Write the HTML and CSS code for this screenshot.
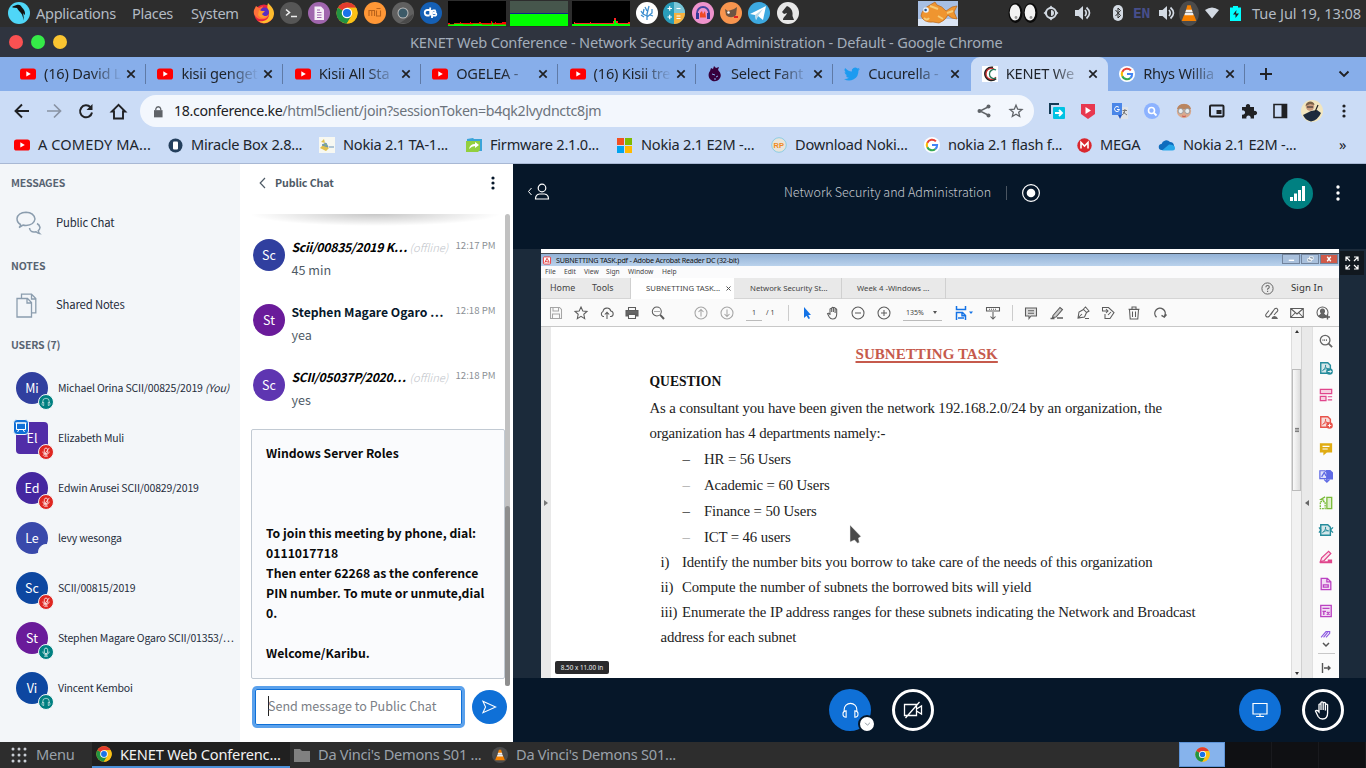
FILE: index.html
```html
<!DOCTYPE html>
<html lang="en">
<head>
<meta charset="utf-8">
<title>KENET Web Conference</title>
<link rel="stylesheet" href="styles.css">
</head>
<body>
<svg class="defs" width="0" height="0">
<defs>
<symbol id="yt" viewBox="0 0 16 16"><rect y="2.5" width="16" height="11" rx="2.6" fill="#f00"/><path d="M6.3 5.3v5.2L10.8 8z" fill="#fff"/></symbol>
<symbol id="x" viewBox="0 0 10 10"><path d="M1.3 1.3l7.4 7.4M8.7 1.3L1.3 8.7" stroke="#202124" stroke-width="1.7" fill="none"/></symbol>
<symbol id="chrome" viewBox="0 0 24 24"><circle cx="12" cy="12" r="11.5" fill="#fbc116"/><path d="M12 12L2 6.3A11.5 11.5 0 0 1 22 6.3H12z" fill="#e33b2e"/><path d="M12 12l5 3-5.2 8.5A11.5 11.5 0 0 1 2 6.3z" fill="#229342"/><path d="M12 6.3h10A11.5 11.5 0 0 1 11.8 23.5L17 15z" fill="#fbc116"/><circle cx="12" cy="12" r="5.7" fill="#fff"/><circle cx="12" cy="12" r="4.4" fill="#1a73e8"/></symbol>
<symbol id="g" viewBox="0 0 16 16"><circle cx="8" cy="8" r="8" fill="#fff"/><g fill="none" stroke-width="2.1"><path d="M11.9 4.4A5.2 5.2 0 0 0 3.3 5.8" stroke="#ea4335"/><path d="M3.3 5.7a5.2 5.2 0 0 0 0 4.6" stroke="#fbbc05"/><path d="M3.3 10.2a5.2 5.2 0 0 0 8.1 1.8" stroke="#34a853"/><path d="M8 8h5.1a5.2 5.2 0 0 1-1.7 4" stroke="#4285f4"/></g></symbol>
<symbol id="vol" viewBox="0 0 16 16"><path d="M0 5h3.5L8 1v14l-4.5-4H0z" fill="#d3dae3"/><path d="M10 5q2.5 3 0 6M11.5 2.5q6 5.500 0 11" fill="none" stroke="#d3dae3" stroke-width="1.7"/></symbol>
<symbol id="cone" viewBox="0 0 16 16"><path d="M6.500 1h3l1.600 6H4.900zM3 11l1-2h8l1 2 1.500 4h-13z" fill="#f58000"/><path d="M5.400 5h5.200l.7 2.500H4.700zM4 10l.4-2h7.200l.4 2z" fill="#eee"/></symbol>
<symbol id="hp" viewBox="0 0 24 24"><path d="M4 14v-3a8 8 0 0 1 16 0v3M6.500 12.500v8c-2.500 0-4-1-4-4s1.500-4 4-4zM17.500 12.500v8c2.500 0 4-1 4-4s-1.500-4-4-4z" fill="none" stroke="currentColor" stroke-width="1.400"/></symbol>
<symbol id="mic" viewBox="0 0 24 24"><path d="M12 2.500c-5 0-4 6-4 10 0 4.500 8 4.500 8 0 0-4 1-10-4-10zM4.500 11c0 9 15 9 15 0M12 18v4M7.500 22h9" fill="none" stroke="currentColor" stroke-width="1.800"/></symbol>
<symbol id="muted" viewBox="0 0 24 24"><path d="M12 2.500c-5 0-4 6-4 10 0 4.500 8 4.500 8 0 0-4 1-10-4-10zM4.500 11c0 9 15 9 15 0M12 18v4M7.500 22h9M20 2L5 21" fill="none" stroke="currentColor" stroke-width="1.800"/></symbol>
<symbol id="pdf" viewBox="0 0 16 16"><path d="M2 2h8l3 3v9H2z" fill="currentColor" fill-opacity=".18" stroke="currentColor" stroke-width="1.600"/><path d="M4 11c2-1 4-4 3.500-6.500C7 7 8 9 11 9 8 8.500 6 9 4 11z" fill="none" stroke="currentColor"/></symbol>
</defs>
</svg>

<div class="screen">
<header class="panel">
  <svg class="i22" viewBox="0 0 22 22"><circle cx="11" cy="11" r="11" fill="#4fd6f7"/><path d="M4.500 4.500l4-1.500c3-.8 4.500.5 5.500 2.500 2 2 3 3.500 3 6.500l-.5 1-1.300-2 .8 7.500-2-6C12 9.500 10 8 9 6L4.500 5.500z" fill="#111"/></svg>
  <span>Applications</span><span>Places</span><span>System</span>
  <svg class="i22" viewBox="0 0 22 22"><circle cx="11" cy="12" r="9.500" fill="#e8233f"/><path d="M15 1c4 4 6 6 6 11a10 10 0 0 1-16 7c6 1 11-1 11-7 0-3-3-5-1-11z" fill="#ffbd2e"/><path d="M1 8l2-4 3 2 4-2-1 3 3 1-2 3c1 3 4 3 6 1-1 5-6 6-10 5-4-2-6-5-5-9z" fill="#ff7139"/><circle cx="11.500" cy="10" r="4.500" fill="#5a2fc0"/><path d="M6 8l3 1 3 0-3 3c2 3 5 2 6 1-2 4-8 4-10 0z" fill="#ff9a2e"/></svg>
  <svg class="i22" viewBox="0 0 22 22"><circle cx="11" cy="11" r="11" fill="#565656"/><path d="M6 7.500l3.500 3L6 13.500M11 14.500h6" stroke="#eee" stroke-width="1.600" fill="none"/></svg>
  <svg class="i22" viewBox="0 0 22 22"><circle cx="11" cy="11" r="11" fill="#a066ae"/><path d="M6.500 4.500h6.500l3 3v10.500H6.500z" fill="#f5eef7"/><path d="M9 8h3M9 10.500h4.500M9 13h4.500M9 15.500h4.500" stroke="#a066ae" fill="none"/></svg>
  <svg class="i22"><use href="#chrome"/></svg>
  <svg class="i22" viewBox="0 0 22 22"><circle cx="11" cy="11" r="11" fill="#ff9736"/><path d="M5 14V8.500h5.500V14M7.800 8.500V14M12.500 8.500V14h4V8.500M12.500 6.500h4" stroke="#b8621b" fill="none" stroke-width="1.100"/></svg>
  <svg class="i22" viewBox="0 0 22 22"><circle cx="11" cy="11" r="11" fill="#606060"/><path d="M8 21h7c4-2 6-5 6-9z" fill="#4a4a4a"/><circle cx="11" cy="11" r="5.500" fill="#bbb"/><circle cx="11" cy="11" r="4.500" fill="#3c5a68"/></svg>
  <svg class="i22" viewBox="0 0 22 22"><circle cx="11" cy="11" r="11" fill="#1560b5"/><path d="M9.500 8H7a2.800 2.800 0 0 0 0 5.500h2.500M10.200 5.500v8M12 8v8M12.500 8.500H15a2 2 0 0 1 0 2.500h-2 2.500a1.500 1.500 0 0 1 0 2.700H12.500" stroke="#fff" fill="none" stroke-width="1.800"/></svg>
  <svg class="graph" viewBox="0 0 58 25"><rect width="58" height="25" fill="#000"/><path d="M0 23v-1h2v1h4v-1h6v-1h1v1h9v-1h1v1h8v-1h2v1h10v-2h1v2h3v-1h1v1h6v-1h4v3H0z" fill="#f00"/><path d="M0 25v-1.500h6v-.7h9v.5h10v-.5h9v.7h10v-2h1v2h13V25z" fill="#0f0"/></svg>
  <svg class="graph" viewBox="0 0 58 25"><rect width="58" height="25" fill="#46564c"/><rect y="12" width="58" height="1" fill="#0b2290"/><rect y="13" width="58" height="12" fill="#0f0"/></svg>
  <svg class="graph" viewBox="0 0 58 25"><rect width="58" height="25" fill="#000"/><path d="M0 23h2v-2h1v1h15v-1h1v1h22v-2h1v-3h2v3h2v2h10v-1h2v3H0z" fill="#f22"/><path d="M0 25v-2h42v-4h2v3h2v1h12v2z" fill="#0f0"/></svg>
  <svg class="i22" viewBox="0 0 22 22"><circle cx="11" cy="11" r="11" fill="#fff"/><path d="M11 18v-7M11 14l-4-2-2-3M7 12l1-5M11 12l2-8M11 15l5-4V7M5 13l3 2M14 13l3 1M11 9L9 5" stroke="#3e8fd0" stroke-width="1.300" fill="none"/></svg>
  <svg class="i22" viewBox="0 0 22 22"><circle cx="11" cy="11" r="11" fill="#2a9dbb"/><path d="M11 0a11 11 0 0 1 11 11H11z" fill="#7cc7d8"/><path d="M11 22a11 11 0 0 0 11-11H11z" fill="#f6b13e"/><path d="M4.500 6.500h4.500M6.700 4.300v4.500M13.500 6.500h4M4.500 15h4.500M6.700 12.800v4.500M13.500 14h4M13.500 16.500h4" stroke="#fff" stroke-width="1.200"/></svg>
  <svg class="i22" viewBox="0 0 22 22"><circle cx="11" cy="11" r="11" fill="#ef93cd"/><path d="M5 14v-3a6 6 0 0 1 12 0v3" stroke="#4545a0" stroke-width="1.800" fill="none"/><rect x="4" y="11" width="3" height="6" fill="#333a98"/><rect x="15" y="11" width="3" height="6" fill="#333a98"/><path d="M8 15.500V11l2-2 1 3 2-3 1 6.500z" fill="#f04a25"/></svg>
  <svg class="i22" viewBox="0 0 22 22"><circle cx="11" cy="11" r="11" fill="#f8954e"/><path d="M5 7l3 2 6-2 3-2-1 8c-3 3-7 3-10 0z" fill="#6d5442"/><circle cx="8.500" cy="10.500" r="1.300" fill="#fff"/><path d="M14 15h4" stroke="#d22" stroke-width="2"/></svg>
  <svg class="i22" viewBox="0 0 22 22"><circle cx="11" cy="11" r="11" fill="#3da9e0"/><path d="M2 12L18 4l-3 14-5-4-2 4-1-5z" fill="#fff"/><path d="M7 13l8-6-5 7-2 4z" fill="#b8d8e8"/></svg>
  <svg class="i22" viewBox="0 0 22 22"><circle cx="11" cy="11" r="11" fill="#e8e8e8"/><path d="M6 18c0-3 3-4 4-7l-3 1-2-2 4-5 1-1 2 1c3 2 4 5 3.500 9L17 18z" fill="#333"/></svg>
  <svg class="fish" viewBox="0 0 40 25"><rect width="40" height="25" fill="#a7bfe4"/><path d="M0 18h40v7H0z" fill="#dbe5f4"/><path d="M3 15q1-7 9-11l5-3 2 3q5 1 9 6l6-4 5-1-3 6 3 7q-6 0-9-4-3 6-9 8l-6-1Q6 22 3 15z" fill="#ef9530" stroke="#b5651d" stroke-width=".7"/><path d="M12 5l8 3M6 17q3 3 5 0M20 15l5 3M29 12l6-2" stroke="#f7cc77" stroke-width="2" fill="none"/><circle cx="8" cy="9" r="2.800" fill="#e7f3ff"/><circle cx="7.600" cy="9" r="1.300" fill="#27538c"/></svg>
  <svg class="eyes" viewBox="0 0 30 22"><ellipse cx="7.500" cy="11" rx="7" ry="10" fill="#0a0a0a"/><ellipse cx="22.500" cy="11" rx="7" ry="10" fill="#0a0a0a"/><ellipse cx="7" cy="10.500" rx="5.300" ry="8" fill="#f2f2f2"/><ellipse cx="22" cy="10.500" rx="5.300" ry="8" fill="#f2f2f2"/><circle cx="8" cy="15.500" r="1.400" fill="#999"/><circle cx="23" cy="15.500" r="1.400" fill="#999"/></svg>
  <svg class="i16" viewBox="0 0 16 16"><circle cx="8" cy="8" r="5" fill="none" stroke="#d3dae3" stroke-width="2"/><path d="M8 5a3 3 0 0 1 0 6z" fill="#d3dae3"/><path d="M5.500 3.500L8 .5l2.500 3M5.500 12.500l2.500 3 2.500-3M3.500 5.500L.5 8l3 2.500M12.500 5.500l3 2.500-3 2.500" fill="#d3dae3"/></svg>
  <svg class="i16"><use href="#vol"/></svg>
  <svg class="bt" viewBox="0 0 12 16"><rect x="1" width="10" height="16" rx="5" fill="#d3dae3"/><path d="M3.500 5l5 5.500L6 13V3l2.500 2.500-5 5.500" stroke="#2d2d2d" fill="none"/></svg>
  <span class="en">EN</span>
  <svg class="i16"><use href="#vol"/></svg>
  <span class="conebg"><svg class="i18"><use href="#cone"/></svg></span>
  <svg class="i16" viewBox="0 0 16 16"><path d="M1 5q7-5 14 0L8 13.500z" fill="#d3dae3"/></svg>
  <svg class="bat" viewBox="0 0 13 15"><path d="M4 0h5v1.500h3V15H1V1.500h3z" fill="#0ff"/><path d="M7.500 4L4 8.500h2.500V12L10 7.500H7z" fill="#222"/></svg>
  <span class="clock">Tue Jul 19, 13:08</span>
</header>

<div class="titlebar"><i class="red"></i><i class="green"></i><i class="yellow"></i><span>KENET Web Conference - Network Security and Administration - Default - Google Chrome</span></div>

<nav class="tabs">
  <div class="tab"><svg class="i16"><use href="#yt"/></svg><span>(16) David L</span><svg class="i10"><use href="#x"/></svg></div>
  <div class="tab"><svg class="i16"><use href="#yt"/></svg><span>kisii genget</span><svg class="i10"><use href="#x"/></svg></div>
  <div class="tab"><svg class="i16"><use href="#yt"/></svg><span>Kisii All Sta</span><svg class="i10"><use href="#x"/></svg></div>
  <div class="tab"><svg class="i16"><use href="#yt"/></svg><span>OGELEA -</span><svg class="i10"><use href="#x"/></svg></div>
  <div class="tab"><svg class="i16"><use href="#yt"/></svg><span>(16) Kisii tre</span><svg class="i10"><use href="#x"/></svg></div>
  <div class="tab"><svg class="i16" viewBox="0 0 16 16"><path d="M3 5L4 2l2 1 1-3 2 2 3-1-1 3c2 2 4 5 2 8-2 4-7 4-9 2-3-2-3-7-1-9z" fill="#37003c"/><path d="M5 8l3 1M9 11l2-1M7 13l2 0" stroke="#87aeea"/></svg><span>Select Fant</span><svg class="i10"><use href="#x"/></svg></div>
  <div class="tab nosep"><svg class="i16" viewBox="0 0 24 24"><path d="M24 4.600a10 10 0 0 1-2.800.8 5 5 0 0 0 2.100-2.700 10 10 0 0 1-3.100 1.200 4.900 4.900 0 0 0-8.400 4.500C7.700 8.100 4.100 6.100 1.700 3.100a4.900 4.900 0 0 0 1.500 6.600 5 5 0 0 1-2.200-.6c0 2.300 1.600 4.400 3.900 4.900a5 5 0 0 1-2.200.1 4.900 4.900 0 0 0 4.600 3.400A10 10 0 0 1 0 19.500 14 14 0 0 0 21.600 7a10 10 0 0 0 2.400-2.400z" fill="#1d9bf0"/></svg><span>Cucurella -</span><svg class="i10"><use href="#x"/></svg></div>
  <div class="tab active nosep"><svg class="i16" viewBox="0 0 16 16"><rect width="16" height="16" fill="#fff"/><g fill="none"><path d="M11 1.500a6.500 6.500 0 1 0 3 11" stroke="#222" stroke-width="1.800"/><path d="M12 3a5.500 5.500 0 1 0 2 8" stroke="#c33" stroke-width="1.300"/><path d="M14 4a4.500 4.500 0 1 0 0 8" stroke="#275" stroke-width="1.300"/></g></svg><span>KENET We</span><svg class="i10"><use href="#x"/></svg></div>
  <div class="tab"><svg class="i16"><use href="#g"/></svg><span>Rhys Willia</span><svg class="i10"><use href="#x"/></svg></div>
  <svg class="plus" viewBox="0 0 12 12"><path d="M6 0v12M0 6h12" stroke="#202124" stroke-width="1.900"/></svg>
  <svg class="down" viewBox="0 0 12 8"><path d="M1.500 1.500L6 6l4.500-4.500" stroke="#202124" stroke-width="1.900" fill="none"/></svg>
</nav>

<div class="toolbar">
  <svg class="i16" viewBox="0 0 16 16"><path d="M15 8H2M8 1.500L1.500 8 8 14.500" stroke="#202124" stroke-width="1.900" fill="none"/></svg>
  <svg class="i16" viewBox="0 0 16 16"><path d="M1 8h13M8 1.500L14.500 8 8 14.500" stroke="#8992a3" stroke-width="1.700" fill="none"/></svg>
  <svg class="i16" viewBox="0 0 16 16"><path d="M12.500 4.200A6 6 0 1 0 14 9.500" stroke="#202124" stroke-width="2" fill="none"/><path d="M14.500 1v6h-6z" fill="#202124"/></svg>
  <svg class="i17" viewBox="0 0 17 17"><path d="M8.500 1.800L1.800 8.500H4V15.500h9V8.500h2.200z" stroke="#202124" stroke-width="1.900" fill="none"/></svg>
  <div class="omni">
    <svg viewBox="0 0 10 13"><path d="M0 5h9.500v8H0z" fill="#5f6368"/><path d="M2 5V3.500a2.800 2.800 0 0 1 5.500 0V5" stroke="#5f6368" stroke-width="1.400" fill="none"/></svg>
    <span><b>18.conference.ke</b>/html5client/join?sessionToken=b4qk2lvydnctc8jm</span>
    <svg class="i14" viewBox="0 0 14 14"><path d="M12 2.500L3 7l9 4.500" stroke="#5f6368" stroke-width="1.400" fill="none"/><circle cx="11.500" cy="2.500" r="2" fill="#5f6368"/><circle cx="2.500" cy="7" r="2" fill="#5f6368"/><circle cx="11.500" cy="11.500" r="2" fill="#5f6368"/></svg>
    <svg class="i14" viewBox="0 0 14 14"><path d="M7 1.200l1.700 4 4.300.3-3.300 2.800 1 4.200L7 10.300l-3.700 2.200 1-4.200L1 5.500l4.300-.3z" stroke="#5f6368" stroke-width="1.300" fill="none"/></svg>
  </div>
  <svg class="i16" viewBox="0 0 16 16"><path d="M1 11V1h9" stroke="#123a55" stroke-width="2" fill="none"/><rect x="4" y="4" width="12" height="12" rx="1" fill="#00c3e3"/><path d="M6 10h7M10 7l3 3-3 3" stroke="#fff" stroke-width="1.800" fill="none"/></svg>
  <svg class="i16" viewBox="0 0 16 16"><path d="M1 1h14v10l-7 5-7-5z" fill="#e8384f"/><path d="M5.500 4v7L11 7.500z" fill="#fff"/></svg>
  <svg class="i16" viewBox="0 0 16 16"><rect x="6" y="4" width="10" height="12" fill="#dfe3e8"/><rect width="10" height="12" fill="#4a86e8"/><path d="M7 4.500a2.500 2.500 0 1 0 .5 2H5" stroke="#fff" fill="none"/><path d="M10.500 7.500h4.500M13 6q0 5-3 6M11 9l4 3" stroke="#777" fill="none"/><path d="M6 12h4l-2 4z" fill="#2457c5"/></svg>
  <svg class="i16" viewBox="0 0 16 16"><circle cx="8" cy="8" r="8" fill="#8cb2ff"/><circle cx="7.500" cy="7.500" r="3" stroke="#fff" stroke-width="1.600" fill="none"/><path d="M10 10l2.500 2.500" stroke="#fff" stroke-width="1.800"/></svg>
  <svg class="i16" viewBox="0 0 16 16"><circle cx="8" cy="8" r="7.200" fill="#dba98c"/><path d="M1 6Q2 1 8 1T15 6z" fill="#b98560"/><circle cx="4.700" cy="8" r="2.600" fill="#e8edf0" stroke="#999"/><circle cx="11.300" cy="8" r="2.600" fill="#e8edf0" stroke="#999"/><path d="M6 13q2 1 4 0" stroke="#c55" fill="none"/></svg>
  <svg class="i16" viewBox="0 0 16 16"><rect x="1" y="2.500" width="13.500" height="11" rx="1" fill="none" stroke="#202124" stroke-width="2"/><rect x="7.500" y="7" width="5" height="4" fill="#202124"/></svg>
  <svg class="i16" viewBox="0 0 16 16"><path d="M1 4h4a2.200 2.200 0 1 1 4 0h4v4a2.200 2.200 0 1 1 0 4v3.500H9.500a2.200 2.200 0 1 0-4 0H1v-4a2.200 2.200 0 1 0 0-4z" fill="#202124"/></svg>
  <svg class="i16" viewBox="0 0 16 16"><path d="M1 1.500h12.500v13H1z" fill="none" stroke="#202124" stroke-width="1.600"/><rect x="8.500" y="1" width="5" height="14" fill="#202124"/></svg>
  <svg class="i22" viewBox="0 0 22 22"><circle cx="11" cy="11" r="11" fill="#f2e6bf"/><path d="M2 15l8-4 6-1 4 3q-3 7-10 8.500Q4 20 2 15z" fill="#1d2b3d"/><circle cx="9" cy="6.500" r="4.200" fill="#c99a7c"/><path d="M4.500 6Q5 2 9 1.500q4 0 4.500 3.500L9 4z" fill="#7a6248"/><path d="M6 7h6M17 5l-3 7" stroke="#222" stroke-width="1.200"/></svg>
  <svg class="i16" viewBox="0 0 16 16"><circle cx="4" cy="3" r="1.600" fill="#202124"/><circle cx="4" cy="8" r="1.600" fill="#202124"/><circle cx="4" cy="13" r="1.600" fill="#202124"/></svg>
</div>

<div class="bookmarks">
  <svg class="i16"><use href="#yt"/></svg><span class="wide">A COMEDY MA...</span>
  <svg class="i15" viewBox="0 0 15 15"><circle cx="7.500" cy="7.500" r="7" fill="#243f5c"/><rect x="5" y="3.500" width="5" height="8" rx="1" fill="#fff"/></svg><span>Miracle Box 2.8...</span>
  <svg class="i16" viewBox="0 0 16 16"><rect width="16" height="16" fill="#f7f8f2"/><path d="M2 5l3-3 1 4zM1 11l4-4 5 4-3 3z" fill="#e1c04c"/><path d="M3 8l4-2 2 4zM10 10h5" stroke="#6b93b8" fill="#8eb36b"/></svg><span>Nokia 2.1 TA-1...</span>
  <svg class="i16" viewBox="0 0 16 16"><path d="M1 2l6-1 1 1h8v12H1z" fill="#3ba4d8"/><path d="M0 4h14v9l-2 2H0z" fill="#92cf3e"/><path d="M3 12q1-5 6-5V5l4 3-4 3V9q-3 0-6 3z" fill="#fff"/></svg><span>Firmware 2.1.0...</span>
  <svg class="i15" viewBox="0 0 15 15"><path d="M0 0h7v7H0z" fill="#f25022"/><path d="M8 0h7v7H8z" fill="#7fba00"/><path d="M0 8h7v7H0z" fill="#00a4ef"/><path d="M8 8h7v7H8z" fill="#ffb900"/></svg><span>Nokia 2.1 E2M -...</span>
  <svg class="i16" viewBox="0 0 16 16"><circle cx="8" cy="8" r="7.300" fill="#e9e4d8" stroke="#8ccde4"/><text x="2.500" y="11" class="rp">RP</text></svg><span>Download Noki...</span>
  <svg class="i16"><use href="#g"/></svg><span>nokia 2.1 flash f...</span>
  <svg class="i15" viewBox="0 0 15 15"><circle cx="7.500" cy="7.500" r="7.200" fill="#d9272e"/><path d="M4 10.500v-6L7.500 8 11 4.500v6" stroke="#fff" stroke-width="1.600" fill="none"/></svg><span>MEGA</span>
  <svg class="i16" viewBox="0 0 16 16"><path d="M3 13a3 3 0 0 1-.5-6A5 5 0 0 1 11 5a4 4 0 0 1 2 7.500z" fill="#0f6cbd"/><path d="M3 13.500l7-6q6 0 6 3.500 0 2.500-2.500 2.500z" fill="#28a8ea"/></svg><span>Nokia 2.1 E2M -...</span>
  <span class="more">»</span>
</div>

<main class="app">
<aside class="side">
  <h2 class="h1">MESSAGES</h2>
  <div class="item r1"><svg class="i25" viewBox="0 0 25 25"><g fill="none" stroke="#8b9dae" stroke-width="1.500"><path d="M4.500 13.500q-3.500-2-3.500-6Q2 1.500 10 1.200 18 1.500 19 8q-1 6-9 6.500-2 0-3-.5l-4 2.500q2-1.500 1.500-3z"/><path d="M21 12.500q2.500 1.200 3 4-.2 2-1.700 3 .1 2 1.200 3-2-.3-3.500-1.700Q14 22 13.500 17"/></g></svg><span>Public Chat</span></div>
  <h2 class="h2">NOTES</h2>
  <div class="item r2"><svg class="i25" viewBox="0 0 25 25"><g fill="none" stroke="#8b9dae" stroke-width="1.300"><path d="M1 5.500h10.500l4 4V24H1zM11 5.500V10h4.500M5.500 5V1.200h10l4.300 4.300v14.300h-4M15.500 1.200V6h4.300"/></g></svg><span>Shared Notes</span></div>
  <h2 class="h3">USERS (7)</h2>
  <div class="user"><b class="av c1">Mi<i class="bd teal"><svg><use href="#hp"/></svg></i></b><span>Michael Orina SCII/00825/2019 <em>(You)</em></span></div>
  <div class="user"><b class="av sq c2">El<i class="pres"><svg viewBox="0 0 14 14"><path d="M2.500 3h9v6.500h-9zM5 9.500L3.500 12M9 9.500l1.500 2.500M1.500 3h11" stroke="#fff" fill="none"/></svg></i><i class="bd rd"><svg><use href="#muted"/></svg></i></b><span>Elizabeth Muli</span></div>
  <div class="user"><b class="av c3">Ed<i class="bd rd"><svg><use href="#muted"/></svg></i></b><span>Edwin Arusei SCII/00829/2019</span></div>
  <div class="user"><b class="av c4">Le<i class="bd none"></i></b><span>levy wesonga</span></div>
  <div class="user"><b class="av c5">Sc<i class="bd rd"><svg><use href="#muted"/></svg></i></b><span>SCII/00815/2019</span></div>
  <div class="user"><b class="av c6">St<i class="bd teal"><svg><use href="#mic"/></svg></i></b><span>Stephen Magare Ogaro SCII/01353/…</span></div>
  <div class="user"><b class="av c5">Vi<i class="bd teal"><svg><use href="#hp"/></svg></i></b><span>Vincent Kemboi</span></div>
</aside>

<section class="chat">
  <div class="chead"><svg viewBox="0 0 7 12"><path d="M6 1L1.200 6 6 11" stroke="#4e5a66" stroke-width="1.200" fill="none"/></svg><span>Public Chat</span><svg class="dots" viewBox="0 0 4 14"><circle cx="2" cy="2" r="1.600" fill="#06172a"/><circle cx="2" cy="7" r="1.600" fill="#06172a"/><circle cx="2" cy="12" r="1.600" fill="#06172a"/></svg></div>
  <div class="scroller">
    <div class="msgs">
      <div class="msg"><b class="av c1">Sc</b><div><p><strong class="off">Scii/00835/2019 K…</strong><em>(offline)</em><time>12:17 PM</time></p><p class="body">45 min</p></div></div>
      <div class="msg"><b class="av c6">St</b><div><p><strong class="on">Stephen Magare Ogaro …</strong><time>12:18 PM</time></p><p class="body">yea</p></div></div>
      <div class="msg"><b class="av c7">Sc</b><div><p><strong class="off">SCII/05037P/2020…</strong><em>(offline)</em><time>12:18 PM</time></p><p class="body">yes</p></div></div>
      <div class="welcome">Windows Server Roles<br><br><br><br>To join this meeting by phone, dial:<br>0111017718<br>Then enter 62268 as the conference<br>PIN number. To mute or unmute,dial<br>0.<br><br>Welcome/Karibu.</div>
    </div>
    <div class="bar"><div class="thumb"></div></div>
  </div>
  <div class="send"><div class="input"><i></i>Send message to Public Chat</div><div class="go"><svg viewBox="0 0 18 16"><path d="M1.500 1.500L16 8 1.500 14.500 4.500 8z" stroke="#fff" stroke-width="1.200" fill="none"/></svg></div></div>
</section>

<section class="stage">
  <div class="nav">
    <svg class="usr" viewBox="0 0 22 18"><g fill="none" stroke="#fff" stroke-width="1.200"><path d="M4 5L1 8.500 4 12" stroke-width="1"/><circle cx="14.500" cy="5" r="3.800"/><path d="M8 16q0-4.500 4-5h5q4 .5 4 5z"/></g></svg>
    <span class="room">Network Security and Administration</span><span class="vr"></span>
    <svg class="rec" viewBox="0 0 20 20"><circle cx="10" cy="10" r="8.400" fill="none" stroke="#fff" stroke-width="1.200"/><circle cx="10" cy="10" r="4.300" fill="#fff"/></svg>
    <svg class="sig" viewBox="0 0 31 31"><circle cx="15.500" cy="15.500" r="15.500" fill="#008081"/><path d="M8 19h3v4H8zM12 15.500h3V23h-3zM16 12h3v11h-3zM20 8h3v15h-3z" fill="#fff"/></svg>
    <svg class="dots" viewBox="0 0 4 16"><circle cx="2" cy="2" r="1.700" fill="#fff"/><circle cx="2" cy="8" r="1.700" fill="#fff"/><circle cx="2" cy="14" r="1.700" fill="#fff"/></svg>
  </div>
  <div class="media">
    <div class="share">
      <div class="atitle"><svg viewBox="0 0 9 9"><rect x=".5" y=".5" width="8" height="8" rx="1" fill="#fff" stroke="#e33"/><path d="M2 7l2.500-5L7 6.500 2.500 5.500" stroke="#d33" fill="none"/></svg><span>SUBNETTING TASK.pdf - Adobe Acrobat Reader DC (32-bit)</span><i class="wb"><svg viewBox="0 0 17 9"><path d="M6 6h6" stroke="#fff" stroke-width="1.600"/></svg></i><i class="wb"><svg viewBox="0 0 17 9"><path d="M8 2h4v3H8zM6 4h4v3H6z" stroke="#fff" fill="#789"/></svg></i><i class="wb cl"><svg viewBox="0 0 17 9"><path d="M6.500 2l4 5M10.500 2l-4 5" stroke="#fff" stroke-width="1.500"/></svg></i></div>
      <div class="amenu"><span>File</span><span>Edit</span><span>View</span><span>Sign</span><span>Window</span><span>Help</span></div>
      <div class="atabs"><span class="home">Home</span><span class="tools">Tools</span><div class="at on"><span>SUBNETTING TASK...</span><svg viewBox="0 0 5 5"><path d="M.5.5l4 4M4.500.5l-4 4" stroke="#555"/></svg></div><div class="at t2">Network Security St...</div><div class="at t3">Week 4 -Windows ...</div><svg class="help" viewBox="0 0 13 13"><circle cx="6.500" cy="6.500" r="5.600" fill="none" stroke="#666"/><path d="M4.800 5.200q.2-1.700 1.800-1.700t1.700 1.500q0 1-1.700 2v.8M6.600 8.700v1.200" fill="none" stroke="#666" stroke-width="1.100"/></svg><span class="signin">Sign In</span></div>
      <div class="abar">
        <svg class="dim" viewBox="0 0 14 14"><path d="M1.500 1.500h9l2 2v9h-11zM4 1.500V5h5.500V1.500M3.500 12.500V8h7v4.500"/></svg>
        <svg viewBox="0 0 14 14"><path d="M7 1l1.800 4 4.200.4-3.200 2.900.9 4.300L7 10.400l-3.700 2.200.9-4.300L1 5.400 5.200 5z"/></svg>
        <svg viewBox="0 0 14 14"><path d="M4 10.500H3a2.700 2.700 0 0 1 0-5 4 4 0 0 1 7.800-.5 2.800 2.800 0 0 1 .2 5.500h-1M7 13V6.500M4.800 8.500L7 6.300l2.200 2.200"/></svg>
        <svg viewBox="0 0 14 14"><path d="M3.500 4V1.500h7V4M3.500 12.500v-4h7v4z"/><path d="M1 4.500h12V10h-2V8H3v2H1z" fill="#666"/></svg>
        <svg viewBox="0 0 14 14"><circle cx="5.800" cy="5.500" r="4.500"/><path d="M9.200 8.800L13 13" stroke-width="2"/><path d="M3.500 5.500h5" stroke-dasharray="1 1"/></svg>
        <svg class="dim" viewBox="0 0 14 14"><circle cx="7" cy="7" r="6"/><path d="M7 10.500v-7M4.500 6L7 3.500 9.500 6"/></svg>
        <svg class="dim" viewBox="0 0 14 14"><circle cx="7" cy="7" r="6"/><path d="M7 3.500v7M4.500 8L7 10.500 9.500 8"/></svg>
        <span class="pg">1</span><span class="of">/ 1</span><i class="sp"></i>
        <svg viewBox="0 0 14 14"><path d="M4 1v11l2.500-2.300L8.500 13l1.500-.7L8.300 9H11z" fill="#1473e6" stroke="none"/></svg>
        <svg viewBox="0 0 14 14"><path d="M4 9V3q1-1 1.700 0v3V2q1-1.300 1.700 0v4V2q1-1 1.700 0v5-4q1.300-.7 1.600.5V8q0 5-4.200 5-2 0-3.200-2L1.500 7.500q1-1 2.500 1z"/></svg>
        <svg viewBox="0 0 14 14"><circle cx="7" cy="7" r="6"/><path d="M4 7h6"/></svg>
        <svg viewBox="0 0 14 14"><circle cx="7" cy="7" r="6"/><path d="M4 7h6M7 4v6"/></svg>
        <span class="zoom">135%<b></b></span>
        <svg class="blue" viewBox="0 0 18 14"><path d="M1.500 0v3.500h9V0M1.500 14V6.500h6l3 3V14M7 6.500v3.300h3.500M3 12h6" /><path d="M14 5.500h4l-2 2.500z" fill="#1473e6" stroke="none"/></svg>
        <svg viewBox="0 0 14 14"><path d="M.5 1.500h13v3.500H.5z"/><path d="M3 3.200h8" stroke-dasharray="1 1"/><path d="M7 6v7M4.500 10.500L7 13l2.500-2.500"/></svg>
        <i class="sp"></i>
        <svg viewBox="0 0 14 14"><path d="M1.500 2h11v8H7l-2 2.500V10H1.500z" fill="#ddd"/><path d="M4 4.800h6M4 7.200h6"/></svg>
        <svg viewBox="0 0 14 14"><path d="M3 9.500L10 1.500l2.500 2L6 11l-3.500.5z" fill="#ccc"/><path d="M.5 12.500h4M7 12h6" stroke-width="1.500"/></svg>
        <svg viewBox="0 0 14 14"><path d="M2 12l1-6 4.500-2.500 3 3L8.500 11zM2 12l4-4M7.500 3L9.500 1 13 5l-2.500 1.500M9 12.500h4"/></svg>
        <svg viewBox="0 0 14 14"><path d="M4 5H1.500V1.500H7.500L13 6.500 9 12.500H4V8M1 5h6M5 3l2 2-2 2M7 9l3-3"/></svg>
        <svg viewBox="0 0 14 14"><path d="M2.500 3.500h9l-.7 9.500H3.200zM1.500 3.200h11M5 3V1h4v2M5.500 5.500v5.500M8.500 5.500v5.500"/></svg>
        <svg viewBox="0 0 14 14"><path d="M3.500 11.200A5.200 5.200 0 1 1 11.500 10M13.500 8.500L11.300 11 8.500 9.300" stroke-width="1.400"/></svg>
        <svg viewBox="0 0 14 14"><path d="M6 8.500L9.500 3q2-1.500 3 .2t-1 3L9 9M8 5L4 10.500q-1.500 1-2.800 0-1-1 0-2.500L4 4.500"/><path d="M6.500 13q0-2.500 2.500-3 3 0 4 3z" fill="#666" stroke="none"/></svg>
        <svg viewBox="0 0 14 14"><path d="M.7 2.500h12.600v9H.7zM.7 2.500L7 8l6.300-5.500M.7 11.500L5 7M13.300 11.500L9 7"/></svg>
        <svg viewBox="0 0 14 14"><circle cx="6.500" cy="6.500" r="5.500"/><path d="M6.500 3q-2 0-2 2.500l1 2.500-2.500 2q3 3 7 0L7.500 8l1-2.500Q8.500 3 6.500 3z" fill="#666"/><path d="M11.500 8.500v5M9 11h5" stroke-width="1.400"/></svg>
      </div>
      <div class="doc">
        <div class="gut"><svg viewBox="0 0 4 6"><path d="M0 0l4 3-4 3z" fill="#777"/></svg></div>
        <article class="page">
          <h1>SUBNETTING TASK</h1>
          <p class="q">QUESTION</p>
          <p class="l1">As a consultant you have been given the network 192.168.2.0/24 by an organization, the</p>
          <p class="l2">organization has 4 departments namely:-</p>
          <p class="li"><i>–</i>HR = 56 Users</p>
          <p class="li lt"><i>–</i>Academic = 60 Users</p>
          <p class="li"><i>–</i>Finance = 50 Users</p>
          <p class="li lt"><i>–</i>ICT = 46 users</p>
          <p class="ro"><i>i)</i>Identify the number bits you borrow to take care of the needs of this organization</p>
          <p class="ro"><i>ii)</i>Compute the number of subnets the borrowed bits will yield</p>
          <p class="ro"><i>iii)</i>Enumerate the IP address ranges for these subnets indicating the Network and Broadcast</p>
          <p class="ro">address for each subnet</p>
          <span class="dim-tip">8.50 x 11.00 in</span>
          <svg class="ptr" viewBox="0 0 14 21"><path d="M1 1l11 11.500-2.500 1.500.8 4.500-1.800.7-3-3.200L1 18z" fill="#4a4a4a" stroke="#eee" stroke-width=".5"/></svg>
        </article>
        <div class="vs"><svg viewBox="0 0 4 3"><path d="M0 3l2-3 2 3z" fill="#333"/></svg><div class="vt"><svg viewBox="0 0 5 6"><path d="M0 1h5M0 3h5M0 5h5" stroke="#555"/></svg></div><svg viewBox="0 0 4 3"><path d="M0 0l2 3 2-3z" fill="#333"/></svg></div>
        <div class="gut rg"><svg viewBox="0 0 4 6"><path d="M4 0L0 3l4 3z" fill="#666"/></svg></div>
        <div class="rail">
          <svg viewBox="0 0 16 16" stroke="#666" fill="none"><circle cx="7" cy="7" r="5.500" stroke-width="1.500"/><path d="M11 11l4 4" stroke-width="2"/><path d="M4 7h6" stroke-dasharray="1 1" stroke-width="2"/></svg>
          <svg viewBox="0 0 16 16" color="#258c9c"><use href="#pdf"/><circle cx="12" cy="12" r="3.800" fill="#258c9c"/><path d="M10 12h4M12.500 10.500L14 12l-1.500 1.500" stroke="#fff" fill="none"/></svg>
          <svg viewBox="0 0 16 16" stroke="#e0468c" stroke-width="1.400" fill="#f6cfe0"><path d="M1.500 1.500h13v5h-13zM1.500 9.500H8v5H1.500z"/><path d="M10 10h5M10 13.500h5"/></svg>
          <svg viewBox="0 0 16 16" color="#e8534a"><use href="#pdf"/><circle cx="12" cy="12" r="3.800" fill="#e8534a"/><path d="M10 12h4M12 10v4" stroke="#fff"/></svg>
          <svg viewBox="0 0 16 16"><path d="M1 1.500h14v10.500H9L5 15.500V12H1z" fill="#e0ac13"/><path d="M4 5h8M4 8h6" stroke="#fff" stroke-width="1.300"/></svg>
          <svg viewBox="0 0 16 16"><path d="M8 1h5l3 3v8H8z" fill="#5f6ae4"/><path d="M1 2h6l2 2v7H1z" fill="#dfe1fa" stroke="#5f6ae4" stroke-width="1.400"/><path d="M3 9l3-5 2 4M9 7v8M6 12l3 3 3-3" fill="none" stroke="#5f6ae4" stroke-width="1.500"/></svg>
          <svg viewBox="0 0 16 16" stroke="#7bbb3a" stroke-width="1.500" fill="none"><path d="M9 1.500h5.500v13H9z" fill="#dff0cd"/><path d="M1.500 6.500H7v8H1.500z" stroke-dasharray="2 1"/><path d="M7 1L2 4l4 1" /></svg>
          <svg viewBox="0 0 16 16" color="#258c9c"><use href="#pdf"/><path d="M0 5l2 3-2 3M16 5l-3 3 3 3" stroke="#258c9c" stroke-width="1.500" fill="none"/></svg>
          <svg viewBox="0 0 16 16" stroke="#e0468c" fill="#fbe0ec"><path d="M1.500 13.500L3 9l8-7.500 2.500 2.500L6 12z" stroke-width="1.400"/><path d="M1 14h14M10 12h5" stroke-width="2.200"/></svg>
          <svg viewBox="0 0 16 16" stroke="#bb43c2" stroke-width="1.500" fill="#f2dcf4"><path d="M2.500 1.500h7l4 4v9h-11zM9 1.500v4h4.500M5 9h5.500v2.500H5z"/></svg>
          <svg viewBox="0 0 16 16" stroke="#bb43c2" stroke-width="1.500" fill="#f2dcf4"><path d="M2 1.500h12v13H2zM4 5h8M4 8.500h4M5.500 8.500v4M9 9l3 3.500M12 9l-3 3.500"/></svg>
          <svg class="cut" viewBox="0 0 16 11" stroke="#8d5ae0" fill="none"><path d="M2 9L8 2h4.500v2L8 9M5 9l5-6" stroke-width="1.400"/></svg>
          <svg class="chev" viewBox="0 0 8 5" stroke="#555" stroke-width="1.500" fill="none"><path d="M1 1l3 3 3-3"/></svg>
          <hr>
          <svg class="exp" viewBox="0 0 10 10" stroke="#555" stroke-width="1.400" fill="none"><path d="M1.500 0v10M3 5h6M7 3l2 2-2 2"/></svg>
        </div>
      </div>
    </div>
    <div class="fs"><svg viewBox="0 0 14 14"><path d="M5 5L1.500 1.500M1 5V1h4M9 5l3.500-3.500M9 1h4v4M5 9l-3.500 3.500M1 9v4h4M9 9l3.500 3.500M9 13h4V9" stroke="#fff" stroke-width="1.200" fill="none"/></svg></div>
  </div>
  <div class="actions">
    <div class="round fill"><svg class="i24"><use href="#hp"/></svg><i class="dd"><svg viewBox="0 0 8 5"><path d="M1 1l3 3 3-3" stroke="#8a949e" stroke-width="1.200" fill="none"/></svg></i></div>
    <div class="round ring"><svg class="i20" viewBox="0 0 20 20" fill="none" stroke="#fff" stroke-width="1.300"><path d="M1.500 4.500h12v11h-12zM13.500 9l5-3v8l-5-3M2.500 18L16.500 2"/></svg></div>
    <span class="gap"></span>
    <div class="round fill"><svg class="i18" viewBox="0 0 18 18" fill="none" stroke="#fff" stroke-width="1.200"><path d="M2 2.500h14v10.500H2zM9 13v2.500M5 15.500h8"/></svg></div>
    <div class="round ring"><svg class="i20" viewBox="0 0 20 20" fill="none" stroke="#fff" stroke-width="1.300"><path d="M6 11.500V4.500q1-1.200 2 0V10 2.500q1-1.400 2.200 0V10 3q1-1.200 2.200 0v7.500-6q1.200-1 2.200.3V13q0 6-5 6-3 0-4.500-2.500L2.500 11q1.200-1.600 3.500 1z"/></svg></div>
  </div>
</section>
</main>

<footer class="taskbar">
  <svg class="i16" viewBox="0 0 16 16"><g fill="#c8cdd4"><circle cx="2" cy="2" r="1.500"/><circle cx="8" cy="2" r="1.500"/><circle cx="14" cy="2" r="1.500"/><circle cx="2" cy="8" r="1.500"/><circle cx="8" cy="8" r="1.500"/><circle cx="14" cy="8" r="1.500"/><circle cx="2" cy="14" r="1.500"/><circle cx="8" cy="14" r="1.500"/><circle cx="14" cy="14" r="1.500"/></g></svg>
  <span class="menu">Menu</span>
  <div class="win on"><svg class="i16"><use href="#chrome"/></svg><span>KENET Web Conferenc...</span></div>
  <div class="win w2"><svg class="i16" viewBox="0 0 16 16"><path d="M0 2h6l2 2h8v11H0z" fill="#808080"/></svg><span>Da Vinci's Demons S01 ...</span></div>
  <div class="win w3"><span class="conebg sm"><svg><use href="#cone"/></svg></span><span>Da Vinci's Demons S01...</span></div>
  <div class="ws"><i class="cur"><svg class="i15"><use href="#chrome"/></svg></i><i></i><i></i><i></i></div>
</footer>
</div>
</body>
</html>
```
FILE: styles.css
```css
* { box-sizing: border-box; }
body { margin: 0; background: #000; }
svg { display: block; flex: none; overflow: visible; }
i { font-style: normal; }
.defs { display: none; }
.screen { width: 1366px; height: 768px; display: flex; flex-direction: column; overflow: hidden; font: 14.6px/20px "Noto Sans", sans-serif; letter-spacing: -.33px; white-space: nowrap; }
.i10 { width: 10px; height: 10px; }
.i14 { width: 14px; height: 14px; }
.i15 { width: 15px; height: 15px; }
.i16 { width: 16px; height: 16px; }
.i17 { width: 17px; height: 17px; }
.i18 { width: 18px; height: 18px; }
.i20 { width: 20px; height: 20px; }
.i22 { width: 22px; height: 22px; }
.i24 { width: 24px; height: 24px; }
.i25 { width: 25px; height: 25px; }

.panel { height: 27px; flex: none; background: #2d2d2d; color: #b3bac3; display: grid; align-items: center; padding: 0 0 1px 8px; overflow: hidden;
  grid-template-columns: 28px 96px 59px 62px 27px 28px 28px 27.5px 28px 28px 28.5px 62px 62px 64px 27px 29px 28px 28px 29px 141px 90px 35px 32px 37px 21px 26px 20px 25px 25px 23px 114px; }
.graph { width: 58px; height: 25px; }
.fish { width: 40px; height: 25px; }
.eyes { width: 30px; height: 22px; }
.bt { width: 12px; height: 16px; }
.bat { width: 13px; height: 15px; }
.en { color: #474f8c; font: bold 14.500px/20px "DejaVu Sans Mono", monospace; }
.clock { letter-spacing: -.1px; }
.conebg { width: 20px; height: 25px; border-radius: 50%; background: #4b4b4b; display: flex; align-items: center; justify-content: center; }

.titlebar { height: 30px; flex: none; background: #2f343f; display: flex; align-items: center; padding: 0 0 1px 9px; gap: 8px; color: #a3adba; letter-spacing: -.19px; }
.titlebar i { width: 14px; height: 14px; border-radius: 50%; }
.titlebar span { margin-left: 335px; }
.red { background: #fa5152; } .green { background: #35ea48; } .yellow { background: #fbc531; }

.tabs { height: 34px; flex: none; background: #87aeea; display: flex; padding-left: 9px; color: #1f2329; align-items: center; }
.tab { width: 137.4px; flex: none; height: 34px; display: flex; align-items: center; padding-left: 11px; letter-spacing: -.2px; }
.tab span { width: 80px; flex: none; margin: -2px 2px 0 8px; overflow: hidden; mask-image: linear-gradient(90deg, #000 58%, transparent 97%); }
.tab::after { content: ""; width: 1px; height: 20px; background: #5f7aa6; margin-left: 9px; }
.tab.nosep::after { background: transparent; }
.tab.active { background: #cbdcf6; border-radius: 9px 9px 0 0; }
.plus { width: 12px; height: 12px; margin-left: 14px; }
.down { width: 12px; height: 8px; margin-left: 66px; }

.toolbar { height: 40px; flex: none; background: #cbdcf6; display: grid; align-items: center; padding-left: 14px;
  grid-template-columns: 32px 32px 32px 30px 909px 31px 32px 32px 32px 33px 32px 32px 28px 39px 20px; }
.omni { width: 894px; height: 32px; border-radius: 16px; background: #f3f7fd; display: flex; align-items: center; padding: 0 11px 0 14px; color: #6c737c; font-size: 14.2px; letter-spacing: -.33px; }
.omni svg:first-child { width: 9px; height: 13px; }
.omni span { margin-left: 11px; flex: 1; }
.omni b { font-weight: 400; color: #202124; }
.omni .i14 { margin-left: 18px; }

.bookmarks { height: 33px; flex: none; background: #cbdcf6; border-bottom: 1px solid #a8b8d4; color: #20252c; display: grid; align-items: center; padding: 0 0 4px 14px; letter-spacing: -.24px;
  grid-template-columns: 24px 130px 23px 128px 24px 123px 24px 127px 24px 130px 24px 129px 24px 129px 23px 59px 24px 156px 20px; }
.bookmarks span { margin-top: -2px; }
.bookmarks .wide { letter-spacing: .1px; }
.rp { font: bold 7.500px "Liberation Sans", sans-serif; fill: #f08a1d; letter-spacing: 0; }

.app { height: 578px; flex: none; display: flex; font-family: "Noto Sans CJK JP", "Noto Sans", sans-serif; letter-spacing: 0; }
.side { width: 240px; background: #f3f6f9; color: #1f2d3c; font-size: 10.500px; letter-spacing: -.16px; }
.side h2 { margin: 0; padding: 0 0 0 11px; font-size: 10.500px; font-weight: 700; color: #586472; display: flex; align-items: center; }
.side .item span { margin-top: -2px; }
.side h2.h1 { height: 38px; } .side h2.h2 { height: 44px; } .side h2.h3 { height: 41px; padding-top: 4px; }
.item { display: flex; align-items: center; padding-left: 16px; gap: 15px; font-size: 11.300px; }
.r1 { height: 42px; } .r2 { height: 34px; }
.user { height: 50px; display: flex; align-items: center; padding-left: 16px; gap: 10px; }
.av { position: relative; width: 32px; height: 32px; flex: none; border-radius: 50%; color: #fff; font-weight: 400; font-size: 12.500px; letter-spacing: 0; line-height: 18px; padding-bottom: 1px; display: flex; align-items: center; justify-content: center; }
.sq { border-radius: 4px; }
.c1 { background: #303f9f; } .c2 { background: #512da8; } .c3 { background: #4527a0; } .c4 { background: #3949ab; } .c5 { background: #0d47a1; } .c6 { background: #6a1b9a; } .c7 { background: #5e35b1; }
.bd { position: absolute; left: 22px; top: 22px; width: 16px; height: 16px; border-radius: 50%; border: 1px solid #f3f6f9; display: flex; align-items: center; justify-content: center; }
.bd svg { width: 10px; height: 10px; }
.teal { background: #008081; } .rd { background: #df2721; } .none { background: #f3f6f9; }
.pres { position: absolute; left: -3px; top: -3px; width: 16px; height: 16px; border-radius: 4px; border: 1px solid #f3f6f9; background: #0f70d7; }
.pres svg { width: 14px; height: 14px; }

.chat { width: 273px; background: #fff; display: flex; flex-direction: column; }
.chead { height: 50px; padding: 0 18px 12px 19px; display: flex; align-items: center; color: #4e5a66; font-weight: 700; font-size: 10.700px; letter-spacing: -.12px; }
.chead svg { width: 7px; height: 12px; }
.chead span { margin-left: 9px; flex: 1; }
.chead .dots { width: 4px; height: 14px; }
.scroller { height: 472px; display: flex; }
.msgs { width: 265px; padding: 25px 0 0 13px; background: radial-gradient(farthest-side at 50% 0, rgba(0,0,0,.22), transparent) 10px 0 / 250px 12px no-repeat; }
.msg { display: flex; gap: 6.500px; height: 65px; }
.msg div { width: 204px; }
.msg p { margin: 0; height: 24px; display: flex; align-items: center; font-size: 12.200px; }
.msg p:first-child { height: 16px; }
.msg p.body { height: 30px; color: #4e5a66; font-size: 12.600px; }
.msg strong { font-weight: 700; color: #000; }
.msg strong.off { font-style: italic; width: 118px; flex: none; letter-spacing: -.26px; }
.msg strong.on { color: #06172a; }
.msg em { color: #c1c5ca; font-size: 11.200px; font-weight: 300; }
.msg time { margin-left: auto; color: #8b9095; font-size: 9.600px; margin-top: -5px; }
.welcome { width: 254px; height: 250px; margin: -5px 0 0 -2px; border: 1px solid #c2cad3; border-radius: 2px; background: #fafbfd; padding: 13px 14px; font-size: 12.220px; line-height: 20px; font-weight: 700; color: #0a0a0a; }
.bar { width: 5px; border-radius: 3px; background: #c1c1c1; padding-top: 292px; }
.thumb { height: 180px; border-radius: 3px; background: #8e8e8e; }
.send { display: flex; padding: 0 0 0 15px; gap: 10px; align-items: center; height: 41px; }
.input { width: 207px; height: 36px; border: 1px solid #0f70d7; outline: 2px solid #5ba1ec; box-shadow: 0 0 0 3px #5ba1ec; border-radius: 2px; display: flex; align-items: center; padding: 0 0 1px 12px; color: #7b8086; font-size: 12.550px; }
.input i { width: 1px; height: 20px; background: #222; margin-right: -1px; }
.go { width: 35px; height: 34px; border-radius: 50%; background: #0f70d7; display: flex; align-items: center; justify-content: center; }
.go svg { width: 17px; height: 14px; }

.stage { width: 853px; background: #061729; display: flex; flex-direction: column; }
.nav { height: 85px; padding: 0 26px 28px 14px; display: flex; align-items: center; }
.usr { width: 23px; height: 18px; margin-top: -1px; }
.room { margin: -2px 0 0 234px; font-size: 12.520px; font-weight: 300; color: #c3c8ce; width: 222px; }
.vr { width: 1px; height: 14px; background: #4a5561; }
.rec { width: 20px; height: 20px; margin-left: 14px; }
.sig { width: 31px; height: 31px; margin-left: 241px; margin-top: 2px; }
.nav .dots { width: 4px; height: 16px; margin-left: 23px; }
.media { height: 429px; background: #1b2a3a; padding-left: 28px; display: flex; gap: 1px; }
.share { width: 798px; background: #fff; padding-top: 4px; font-family: "Noto Sans", sans-serif; color: #444; }
.atitle { height: 13px; border-top: 1px solid #454d57; background: linear-gradient(#93b2d6, #bad2ec); display: flex; align-items: center; padding-left: 2px; color: #111; font-size: 7.200px; letter-spacing: -.23px; line-height: 12px; }
.atitle > svg { width: 8px; height: 9px; margin-right: 5px; }
.atitle span { flex: 1; }
.wb { width: 18px; height: 10px; border: 1px solid #71839c; background: #a9c0dc; margin-right: 1px; align-self: flex-start; }
.wb svg { width: 16px; height: 8px; }
.wb.cl { background: #cf5a49; }
.amenu { height: 12px; background: #fbfbfc; display: grid; grid-template-columns: 19px 20px 22px 22px 34px 30px; padding-left: 4px; font-size: 6.700px; line-height: 11px; letter-spacing: 0; }
.atabs { height: 21px; background: #e9e9e9; border-bottom: 1px solid #d5d5d5; display: flex; align-items: center; font-size: 8.900px; padding-left: 9px; letter-spacing: 0; }
.home { width: 42px; } .tools { width: 38px; }
.at { height: 21px; border-left: 1px solid #d0d0d0; font-size: 7.750px; display: flex; align-items: center; padding-left: 15px; letter-spacing: 0; }
.at.on { width: 104px; background: #fff; gap: 5px; }
.at.on span { width: 75px; }
.at.on svg { width: 5px; height: 5px; }
.at.t2 { width: 107px; border: 0; padding-left: 16px; } .t3 { width: 105px; border-right: 1px solid #d0d0d0; }
.help { width: 13px; height: 13px; margin-left: 315px; }
.signin { margin-left: 17px; color: #333; font-size: 9.600px; letter-spacing: .1px; }
.abar { height: 28px; background: #fafafa; border-bottom: 1px solid #c8c8c8; display: grid; align-items: center; padding-left: 8px; letter-spacing: 0;
  grid-template-columns: 25px 26px 25px 26px 43px 26px 26px 20px 22px 12px 26px 25px 26px 19px 59px 31px 26px 12px 26px 26px 25px 26px 26px 112px 25px 26px 15px; }
.abar svg { width: 14px; height: 14px; fill: none; stroke: #5c5c5c; stroke-width: 1.050; }
.abar svg.dim { stroke: #a5a5a5; }
.abar svg.blue { width: 18px; stroke: #1473e6; stroke-width: 1.500; }
.abar span { font-size: 7px; }
.pg { width: 16px; height: 16px; line-height: 15px; border-bottom: 1px solid #bbb; text-align: center; }
.sp { width: 1px; height: 16px; background: #ccc; }
.zoom { width: 39px; height: 16px; line-height: 15px; border-bottom: 1px solid #bbb; padding-left: 3px; display: flex; align-items: center; gap: 9px; margin-left: 7px; }
.zoom b { border: 2.500px solid transparent; border-top: 3px solid #555; border-bottom: 0; }
.doc { height: 351px; display: flex; }
.gut { width: 10px; background: #e9e9e9; display: flex; align-items: center; justify-content: center; }
.gut svg { width: 4px; height: 6px; }
.page { width: 740px; position: relative; font-family: "Liberation Serif", serif; font-size: 14.800px; color: #222; letter-spacing: -.12px; padding: 14px 0 0 98.500px; }
.page p { margin: 0; height: 25px; line-height: 25px; }
.page h1 { margin: 0 0 0 206px; width: 143px; height: 26px; font-size: 15px; letter-spacing: .05px; line-height: 26px; color: #c65a4c; text-decoration: underline; text-decoration-thickness: 1.500px; text-underline-offset: 2px; }
.page p.q { height: 29px; line-height: 29px; color: #111; font-weight: 700; font-size: 13.600px; letter-spacing: 0; }
.page p.li { height: 26px; line-height: 26px; padding-left: 33px; display: flex; }
.li i { width: 21.500px; color: #333; }
.li.lt i { color: #aaa; }
.page p.ro { padding-left: 11px; display: flex; }
.ro i { width: 21.500px; }
.dim-tip { position: absolute; left: 4px; bottom: 4px; width: 54px; height: 13px; border-radius: 2px; background: #2a2a2c; color: #eee; font: 6.300px/13px "Noto Sans", sans-serif; letter-spacing: 0; text-align: center; }
.ptr { position: absolute; left: 298px; top: 197px; width: 14px; height: 21px; }
.vs { width: 11px; background: #f2f2f2; border-left: 1px solid #ddd; border-right: 1px solid #d0d0d0; display: flex; flex-direction: column; align-items: center; padding: 3px 0; }
.vs svg { width: 4px; height: 3px; }
.vt { width: 9px; height: 122px; margin: 36px 0 auto; border: 1px solid #bbb; background: linear-gradient(90deg, #fafafa, #ddd); display: flex; align-items: center; justify-content: center; }
.vt svg { width: 4px; height: 6px; }
.rail { width: 27px; background: #fbfbfb; border-left: 1px solid #e0e0e0; display: flex; flex-direction: column; align-items: center; padding-top: 7px; }
.rail svg { width: 14px; height: 14px; margin-bottom: 13px; }
.rail svg.cut { width: 14px; height: 9px; margin-top: -1px; margin-bottom: 3px; }
.rail svg.chev { width: 8px; height: 5px; margin: 0 0 6px; }
.rail hr { width: 17px; height: 1px; border: 0; background: #c8c8c8; margin: 0 0 9px; }
.rail svg.exp { width: 10px; height: 10px; margin: 0; }
.fs { width: 24px; height: 24px; margin-top: 2px; background: #11181f; display: flex; align-items: center; justify-content: center; }
.fs svg { width: 14px; height: 14px; }
.actions { height: 64px; display: flex; gap: 21px; align-items: center; padding-left: 316px; }
.round { position: relative; width: 42px; height: 42px; border-radius: 50%; display: flex; align-items: center; justify-content: center; color: #fff; flex: none; }
.round .i24 { width: 19px; height: 19px; }
.fill { background: #0f70d7; }
.ring { border: 3px solid #fff; }
.gap { width: 263px; }
.dd { position: absolute; left: 29px; top: 26px; width: 18px; height: 18px; border-radius: 50%; background: #fff; border: 2px solid #061729; display: flex; align-items: center; justify-content: center; }
.dd svg { width: 7px; height: 4px; }

.taskbar { height: 26px; flex: none; background: #2d2d2d; color: #9aa1aa; display: flex; align-items: center; padding-left: 11px; letter-spacing: -.26px; }
.taskbar > .menu, .win > span:last-child { margin-top: -2px; }
.menu { margin-left: 9px; width: 56px; }
.win { height: 26px; display: flex; align-items: center; gap: 8px; padding-left: 4px; width: 198px; flex: none; }
.win.on { background: #202020; border-bottom: 2px solid #4a90d9; color: #f2f2f2; letter-spacing: -.18px; }
.win.on > span:last-child { margin-top: 0; }
.win.w3 { width: 691px; padding-left: 4px; }
.conebg.sm { width: 16px; height: 16px; }
.conebg.sm svg { width: 12px; height: 12px; }
.ws { display: flex; height: 26px; background: #0f1013; flex: 1; }
.ws i { width: 47px; border-right: 1px solid #191a1e; }
.ws .cur { width: 46px; height: 25px; background: #86b3ec; border: 1px solid #5e94d8; display: flex; align-items: center; justify-content: center; }
```
